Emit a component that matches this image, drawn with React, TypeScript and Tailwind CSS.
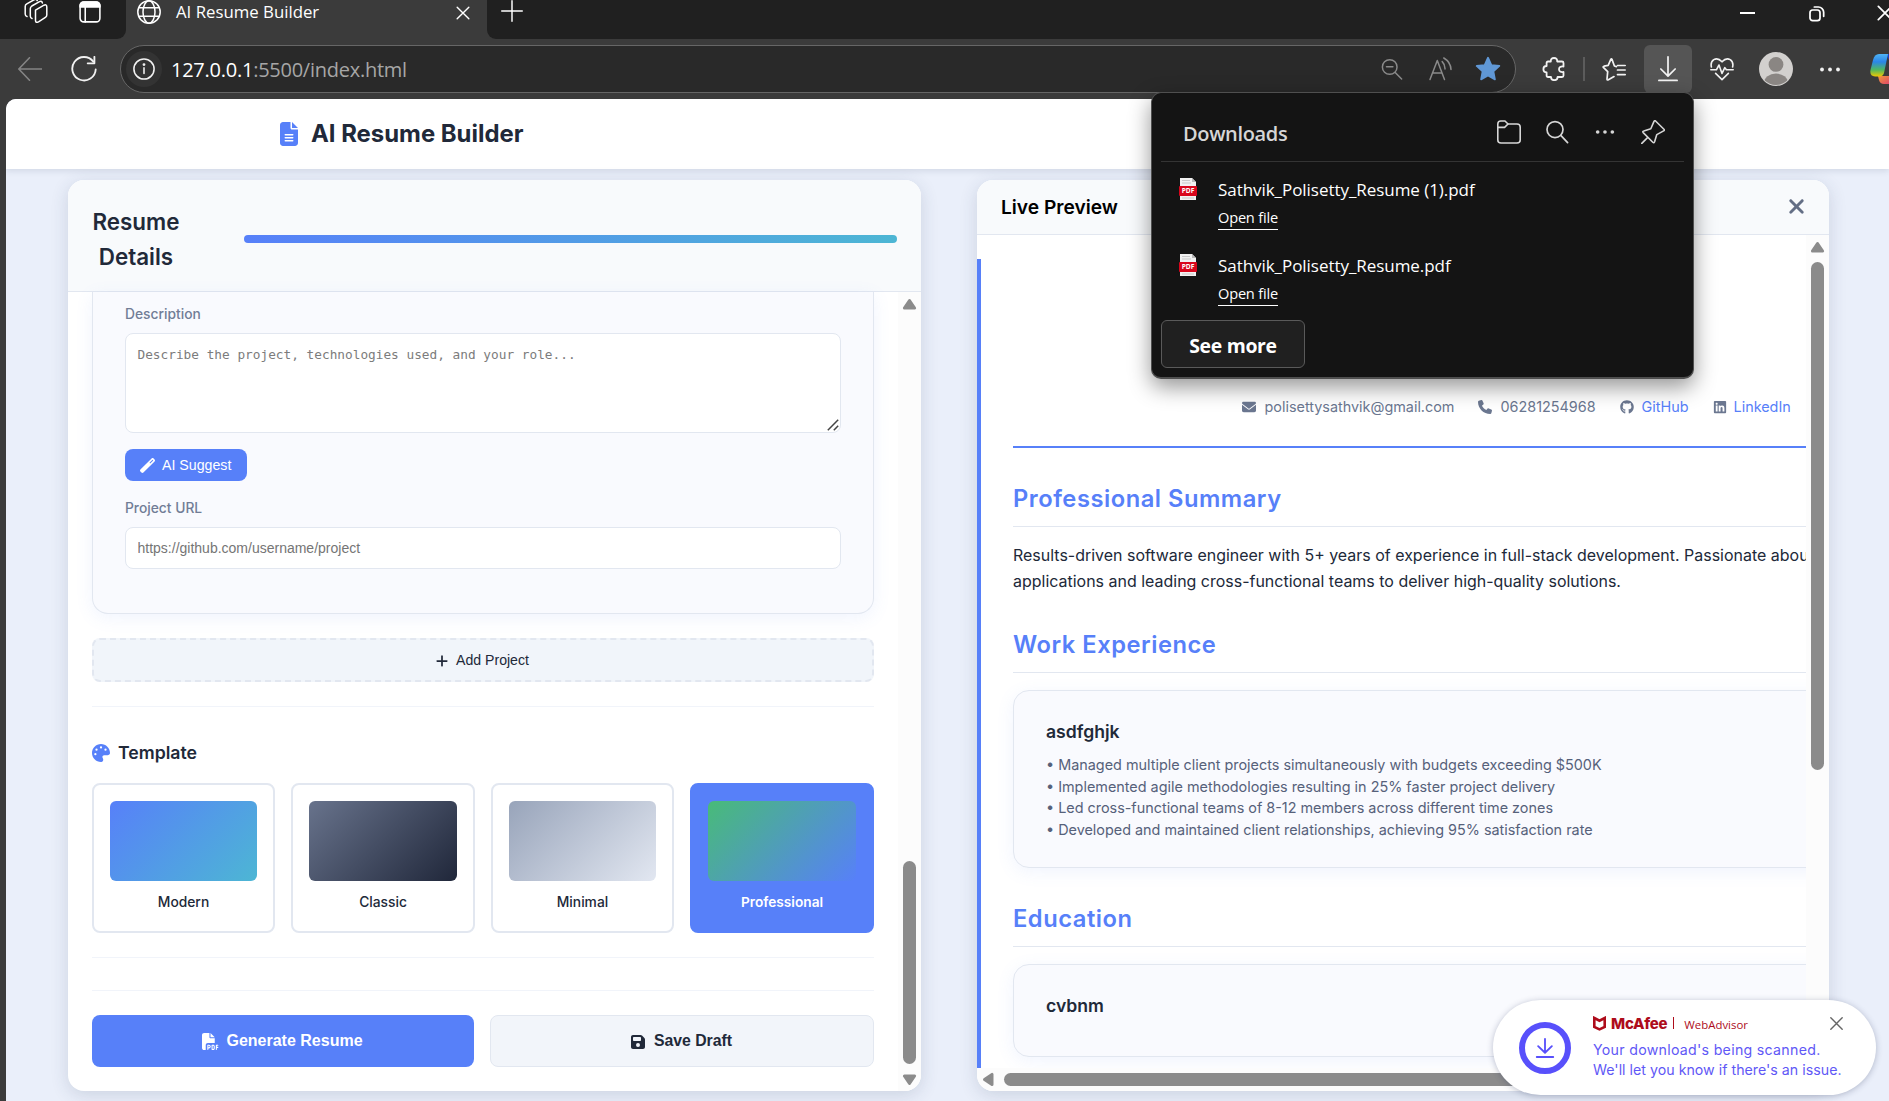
import React from "react";
import {
  FaFileLines,
  FaPalette,
  FaFilePdf,
  FaFloppyDisk,
  FaEnvelope,
  FaPhone,
  FaGithub,
  FaLinkedin,
  FaPlus,
  FaXmark,
  FaWandMagic,
} from "react-icons/fa6";

type IconProps = { size?: number; className?: string; children: React.ReactNode; sw?: number };

function Line({ size = 24, className = "", sw = 1.5, children }: IconProps) {
  return (
    <svg
      width={size}
      height={size}
      viewBox="0 0 24 24"
      fill="none"
      stroke="currentColor"
      strokeWidth={sw}
      strokeLinecap="round"
      strokeLinejoin="round"
      className={"shrink-0 " + className}
    >
      {children}
    </svg>
  );
}

function Dots({ r = 2 }: { r?: number }) {
  return (
    <svg width="22" height="24" viewBox="0 0 24 24" fill="currentColor">
      <circle cx="4" cy="12" r={r} />
      <circle cx="12" cy="12" r={r} />
      <circle cx="20" cy="12" r={r} />
    </svg>
  );
}

function TabStrip() {
  return (
    <div className="flex h-[39px] shrink-0 bg-[#3b3b3b] text-white">
      <div className="flex w-[126px] items-start rounded-br-[9px] bg-[#202020] pl-6">
        <Line className="-mt-px" sw={1.5}>
          <path d="M11.5 11.2 L20 6.2 Q22.8 5 22.8 8 V16 Q22.8 17.6 21.4 18.4 L14.5 22.8 Q11.5 24.4 11.5 21.4 Z" />
          <path d="M8 19.5 Q6.3 19 6.3 17 V9.8 Q6.3 8 7.8 7 L15.5 2.6 Q18 1.6 18.4 4" />
          <path d="M3 17.5 Q1.2 17 1.2 15 V7.5 Q1.2 5.8 2.8 4.9 L10 .8 Q12.8 -.4 13.2 1.6" />
        </Line>
        <Line size={22} className="ml-[31px] mt-px" sw={1.7}>
          <rect x="1.2" y="1.2" width="21.6" height="21.6" rx="4" />
          <path d="M1.2 6.5 V5 a4 4 0 0 1 4-4 h13.6 a4 4 0 0 1 4 4 v1.5 z" fill="currentColor" />
          <path d="M6.8 7 V22.8" />
        </Line>
      </div>
      <div className="flex w-[361px] items-start pl-[11px]">
        <Line sw={1.5}>
          <circle cx="12" cy="12" r="11.2" />
          <ellipse cx="12" cy="12" rx="6" ry="11.2" />
          <path d="M2 7.8 H22 M2 16.2 H22" />
        </Line>
        <span className="ml-[15px] mt-px font-['Open_Sans'] text-[16.8px] leading-[22px] whitespace-nowrap">AI Resume Builder</span>
        <Line size={14} className="mt-[6px] mr-[17px] ml-auto" sw={2.4}>
          <path d="M2 2 L22 22 M22 2 L2 22" />
        </Line>
      </div>
      <div className="flex flex-1 items-start rounded-bl-[9px] bg-[#202020] pl-[14px]">
        <Line size={22} sw={1.6}>
          <path d="M12 .8 V23.2 M.8 12 H23.2" />
        </Line>
        <div className="ml-auto flex w-[149px] shrink-0 items-start">
          <div className="mt-[12px] h-[2px] w-[15px] shrink-0 bg-white" />
          <Line size={16} className="mt-[6px] ml-[54px]" sw={2.6}>
            <rect x="1.5" y="6" width="15" height="16" rx="4" />
            <path d="M8 1.5 h6 a8 8 0 0 1 8 8 v6" />
          </Line>
          <Line size={16} className="mt-[5px] ml-[52px]" sw={2.6}>
            <path d="M2 2 L22 22 M22 2 L2 22" />
          </Line>
        </div>
      </div>
    </div>
  );
}

function Toolbar() {
  return (
    <div className="flex h-[60px] shrink-0 items-start bg-[#3b3b3b] pt-[6px] text-[#f2f2f2]">
      <div className="flex h-12 w-[120px] shrink-0 items-center pl-[18px]">
        <Line className="text-[#858585]" sw={1.6}>
          <path d="M23.5 12 H1 M11.5 .8 L.8 12 L11.5 23.2" />
        </Line>
        <Line className="ml-[29px]" size={26} sw={1.7}>
          <path d="M20.6 5.2 A10.8 10.8 0 1 0 22.8 12.4" />
          <path d="M21.6 .8 V6.8 H15.4" />
        </Line>
      </div>
      <div className="flex h-12 w-[1396px] shrink-0 items-center rounded-full border-[1.5px] border-[#666666] bg-[#292929]">
        <div className="ml-[5px] flex size-9 items-center justify-center rounded-full bg-[#333333]">
          <Line size={22} sw={1.7}>
            <circle cx="12" cy="12" r="11" />
            <path d="M12 10.8 V17" />
            <circle cx="12" cy="7.2" r=".7" fill="currentColor" />
          </Line>
        </div>
        <span className="mt-px ml-[9px] font-['Open_Sans'] text-[20px] leading-none tracking-[-0.25px] whitespace-nowrap text-[#a6a6a6]">
          <span className="text-white">127.0.0.1</span>:5500/index.html
        </span>
        <div className="mr-[3px] ml-auto flex text-[#8a8a8a]">
          <div className="flex w-12 items-center justify-center">
            <Line size={22} sw={1.6}>
              <circle cx="9.5" cy="9.8" r="8" />
              <path d="M15.5 15.8 L22.5 23 M6 9.6 H13" />
            </Line>
          </div>
          <div className="flex w-12 items-center justify-center">
            <Line size={24} sw={1.5}>
              <path d="M2 22.5 L9.3 3.5 L16.5 22.5 M4.6 16 H14" />
              <path d="M14.2 4.6 Q17.2 7.6 17 12 M15.8 1 Q22.6 5 23 12.4" />
            </Line>
          </div>
          <div className="flex w-12 items-center justify-center text-[#6098d6]">
            <svg width="26" height="26" viewBox="0 0 24 24" fill="currentColor" stroke="currentColor" strokeWidth="1.6" strokeLinejoin="round">
              <path d="M12 1.6 L15.1 8.3 L22.5 9.2 L17 14.2 L18.4 21.6 L12 18 L5.6 21.6 L7 14.2 L1.5 9.2 L8.9 8.3 Z" />
            </svg>
          </div>
        </div>
      </div>
      <div className="ml-[14px] flex h-12 w-12 shrink-0 items-center justify-center">
        <Line sw={1.8}>
          <path d="M6 4.5 H8.8 Q8.6 1 12 1 Q15.4 1 15.2 4.5 H20 Q21.5 4.5 21.5 6 V9.5 Q17 9 17 12.3 Q17 15.5 21.5 15 V18.6 Q21.5 20 20 20 H15.6 Q15.6 23.2 12.2 23.2 Q9 23.2 9 20 H6 Q4.6 20 4.6 18.6 V15.4 Q1.4 15.4 1.4 12.2 Q1.4 9 4.6 9 V6 Q4.6 4.5 6 4.5 Z" />
        </Line>
      </div>
      <div className="mx-[5px] mt-3 h-6 w-[2px] shrink-0 bg-[#5c5c5c]" />
      <div className="flex h-12 w-12 shrink-0 items-center justify-center">
        <Line sw={1.7}>
          <path d="M14 9.2 L12 8.6 L9.6 2 Q9 .8 8.4 2 L5.8 8 L1.6 8.8 Q.2 9.2 1.2 10.3 L5.3 14.3 L4.6 21.6 Q4.6 23 6 22.4 L11.6 19.2" transform="translate(.4 .4)" />
          <path d="M15.5 8.5 H23.2 M15.5 13 H23.2 M15.5 17.6 H23.2" />
        </Line>
      </div>
      <div className="ml-[6px] flex h-12 w-12 shrink-0 items-center justify-center rounded-[6px] bg-[#555555]">
        <Line size={26} sw={1.6}>
          <path d="M12 .8 V18 M5.4 12 L12 18.6 L18.6 12 M3.6 22.6 H20.4" />
        </Line>
      </div>
      <div className="ml-[6px] flex h-12 w-12 shrink-0 items-center justify-center">
        <Line sw={1.6}>
          <path d="M1.4 10 Q.2 5 3.8 2.6 Q8 .4 12 4.8 Q16 .4 20.2 2.6 Q23.8 5 22.6 10" />
          <path d="M.8 12.8 H6.4 L9 8 L12 16.4 L14.8 10.6 L16.4 12.8 H23.2" />
          <path d="M5.6 16.4 L12 22.6 L18.4 16.4" />
        </Line>
      </div>
      <div className="ml-[6px] flex h-12 w-12 shrink-0 items-center justify-center">
        <svg width="34" height="34" viewBox="0 0 34 34">
          <defs>
            <clipPath id="av">
              <circle cx="17" cy="17" r="16" />
            </clipPath>
          </defs>
          <circle cx="17" cy="17" r="17" fill="#d2d0ce" />
          <g clipPath="url(#av)" fill="#8a8683">
            <circle cx="17" cy="12.4" r="7.4" />
            <ellipse cx="17" cy="31" rx="12" ry="9.4" />
          </g>
        </svg>
      </div>
      <div className="ml-[6px] flex h-12 w-12 shrink-0 items-center justify-center">
        <svg width="20" height="20" viewBox="0 0 20 20" fill="currentColor">
          <circle cx="2" cy="10.5" r="1.9" />
          <circle cx="10" cy="10.5" r="1.9" />
          <circle cx="18" cy="10.5" r="1.9" />
        </svg>
      </div>
      <svg width="34" height="32" viewBox="0 0 34 32" className="mt-[8px] ml-[16px] shrink-0">
        <defs>
          <linearGradient id="cpA" x1="0" y1="0" x2="0" y2="1">
            <stop offset="0" stopColor="#4fb4f5" />
            <stop offset=".35" stopColor="#2b86e8" />
            <stop offset=".7" stopColor="#4fb860" />
            <stop offset="1" stopColor="#f0c800" />
          </linearGradient>
          <linearGradient id="cpB" x1="0" y1="0" x2="1" y2="1">
            <stop offset="0" stopColor="#f29a3a" />
            <stop offset="1" stopColor="#e0446a" />
          </linearGradient>
        </defs>
        <path d="M8 23 H20 V31 H14 Q10 31 9 27 Z" fill="url(#cpB)" />
        <path d="M16 1 H22 Q25 1 26 6 L27 9 H20 Z" fill="#1b3fc4" />
        <path d="M9 1 H18 L14 20 Q13 23.5 9 23.5 H5 Q-.5 23 .5 17 L3 7 Q4.5 1 9 1 Z" fill="url(#cpA)" />
      </svg>
    </div>
  );
}

function Tri({ dir }: { dir: "up" | "down" | "left" }) {
  const d =
    dir === "up"
      ? "M7.5 3.5 L12.6 11 H2.4 Z"
      : dir === "down"
        ? "M7.5 11.5 L12.6 4 H2.4 Z"
        : "M3.5 7.5 L11 2.4 V12.6 Z";
  return (
    <svg width="15" height="15" viewBox="0 0 15 15" fill="#8b8b8b" stroke="#8b8b8b" strokeWidth="3" strokeLinejoin="round" className="shrink-0">
      <path d={d} />
    </svg>
  );
}

const templates = [
  { name: "Modern", swatch: "bg-[linear-gradient(135deg,#5780f9,#4db6d4)]", on: false },
  { name: "Classic", swatch: "bg-[linear-gradient(135deg,#68738c,#20273a)]", on: false },
  { name: "Minimal", swatch: "bg-[linear-gradient(135deg,#98a4ba,#e2e7f1)]", on: false },
  { name: "Professional", swatch: "bg-[linear-gradient(135deg,#48bb78,#5780f9)]", on: true },
];

function ResumeForm() {
  return (
    <section className="flex h-[911px] w-[853px] shrink-0 flex-col overflow-hidden rounded-[16px] bg-white shadow-[0_4px_18px_rgba(45,60,95,0.16)]">
      <div className="flex h-28 shrink-0 items-center border-b border-[#e2e7f0] bg-[#f8fafc] pt-[6px] pl-6">
        <h2 className="w-[88px] text-center text-[22.4px] leading-[35px] font-semibold text-[#212939]">Resume Details</h2>
        <div className="ml-16 h-2 w-[653px] rounded-full bg-[linear-gradient(90deg,#5780f9,#4db6d4)]" />
      </div>
      <div className="flex min-h-0 flex-1">
        <div className="flex w-[830px] flex-col px-6">
          <div className="h-[322px] w-[782px] shrink-0 rounded-b-[16px] border border-t-0 border-[#e2e7f0] bg-[#f9fafe] px-8 pt-[11px] shadow-[0_4px_18px_rgba(87,128,249,0.09)]">
            <label className="block text-[13.8px] leading-[22px] font-medium text-[#717d96]">Description</label>
            <div className="relative mt-2 h-[100px] w-[716px]">
              <textarea
                className="block h-full w-full resize-none rounded-[8px] border border-[#e2e7f0] bg-white px-[11.5px] pt-[13px] font-['DejaVu_Sans_Mono',monospace] text-[12.77px] leading-4 placeholder:text-[#7c7c7c]"
                placeholder="Describe the project, technologies used, and your role..."
              />
              <svg width="12" height="12" viewBox="0 0 12 12" className="absolute right-[2px] bottom-[2px]" stroke="#444444" strokeWidth="1.5">
                <path d="M.8 11.2 L11.2 .8 M6.8 11.2 L11.2 6.8" />
              </svg>
            </div>
            <button className="mt-4 flex h-8 w-[122px] items-center rounded-[8px] bg-[#5780f9] pt-px pl-[15px] font-['Liberation_Sans'] text-[14.2px] text-white">
              <FaWandMagic size={15} />
              <span className="ml-[7px]">AI Suggest</span>
            </button>
            <label className="mt-4 block text-[13.8px] leading-[22px] font-medium text-[#717d96]">Project URL</label>
            <input
              className="mt-2 block h-[42px] w-[716px] rounded-[8px] border border-[#e2e7f0] bg-white px-[11.5px] font-['Liberation_Sans'] text-[14px] placeholder:text-[#757575]"
              placeholder="https://github.com/username/project"
            />
          </div>
          <button className="mt-6 flex h-11 w-[782px] shrink-0 items-center justify-center rounded-[8px] border-2 border-dashed border-[#e2e7f0] bg-[#f1f5fa] pt-px pr-[2px] font-['Liberation_Sans'] text-[14.1px] text-[#212939]">
            <FaPlus size={14} className="mr-[7px]" />
            Add Project
          </button>
          <div className="mt-6 h-px w-[782px] shrink-0 bg-[#f1f4fa]" />
          <h3 className="mt-[32px] flex h-7 shrink-0 items-center text-[17.7px] font-semibold text-[#212939]">
            <FaPalette size={18} className="mr-2 text-[#5780f9]" />
            Template
          </h3>
          <div className="mt-4 grid w-[782px] shrink-0 grid-cols-[183px_184px_183px_184px] gap-4">
            {templates.map((t) => (
              <div
                key={t.name}
                className={
                  t.on
                    ? "h-[150px] rounded-[8px] border-2 border-[#5780f9] bg-[#5780f9] p-4 text-center text-[13.7px] font-semibold text-white"
                    : "h-[150px] rounded-[8px] border-2 border-[#e2e7f0] bg-white p-4 text-center text-[13.8px] font-medium text-[#212939]"
                }
              >
                <div className={"h-20 rounded-[6px] " + t.swatch} />
                <div className="mt-[10px] leading-[22px]">{t.name}</div>
              </div>
            ))}
          </div>
          <div className="mt-6 h-px w-[782px] shrink-0 bg-[#f1f4fa]" />
          <div className="mt-8 h-px w-[782px] shrink-0 bg-[#f1f4fa]" />
          <div className="mt-6 flex w-[782px] shrink-0 gap-4 font-['Liberation_Sans'] font-bold">
            <button className="flex h-[52px] w-[382px] items-center justify-center rounded-[8px] bg-[#5780f9] pr-px text-[16px] text-white">
              <FaFilePdf size={17} className="mr-[7px]" />
              Generate Resume
            </button>
            <button className="flex h-[52px] w-[384px] items-center justify-center rounded-[8px] border border-[#e2e7f0] bg-[#f2f5fa] pr-[2px] text-[15.8px] text-[#212939]">
              <FaFloppyDisk size={16} className="mt-px mr-2" />
              Save Draft
            </button>
          </div>
        </div>
        <div className="flex w-[23px] flex-col items-center bg-[#fcfcfc] pt-[5px] pb-[4px]">
          <Tri dir="up" />
          <div className="mt-auto mb-[8px] h-[203px] w-[13px] rounded-full bg-[#8b8b8b]" />
          <Tri dir="down" />
        </div>
      </div>
    </section>
  );
}

function SectionTitle({ children }: { children: React.ReactNode }) {
  return (
    <h3 className="w-[1000px] border-b border-[#e2e7f0] pt-px pb-[10px] text-[23.7px] leading-[34px] font-semibold tracking-[0.53px] text-[#5780f9]">
      {children}
    </h3>
  );
}

const bullets = [
  "• Managed multiple client projects simultaneously with budgets exceeding $500K",
  "• Implemented agile methodologies resulting in 25% faster project delivery",
  "• Led cross-functional teams of 8-12 members across different time zones",
  "• Developed and maintained client relationships, achieving 95% satisfaction rate",
];

function Preview() {
  return (
    <section className="flex h-[911px] w-[852px] shrink-0 flex-col overflow-hidden rounded-[16px] bg-white shadow-[0_4px_18px_rgba(45,60,95,0.16)]">
      <div className="flex h-[55px] shrink-0 items-center justify-between border-b border-[#e2e7f0] bg-[#f8fafc] pr-[21px] pl-6">
        <h2 className="text-[19.2px] font-semibold text-black">Live Preview</h2>
        <FaXmark size={23} className="-mt-[2px] text-[#636e85]" />
      </div>
      <div className="flex min-h-0 flex-1">
        <div className="w-[829px] overflow-hidden pt-6">
          <div className="h-[809px] w-[1060px] border-l-4 border-[#5780f9] pl-8">
            <div className="flex h-[189px] w-[1000px] items-start border-b-2 border-[#5780f9] pt-[136px] pl-[229px] text-[14.4px] leading-[23px] text-[#6b7790]">
              <div className="flex items-center whitespace-nowrap">
                <FaEnvelope size={14} />
                <span className="ml-[8.5px]">polisettysathvik@gmail.com</span>
                <FaPhone size={14} className="ml-6" />
                <span className="ml-[8px]">06281254968</span>
                <FaGithub size={14} className="ml-6" />
                <span className="ml-[8px] text-[#5780f9]">GitHub</span>
                <FaLinkedin size={14} className="ml-6" />
                <span className="ml-[7px] text-[#5780f9]">LinkedIn</span>
              </div>
            </div>
            <div className="pt-[33px]">
              <SectionTitle>Professional Summary</SectionTitle>
              <p className="mt-[16px] text-[15.97px] leading-[26px] whitespace-nowrap text-[#212939]">
                Results-driven software engineer with 5+ years of experience in full-stack development. Passionate about building scalable
                <br />
                applications and leading cross-functional teams to deliver high-quality solutions.
              </p>
            </div>
            <div className="pt-[32px]">
              <SectionTitle>Work Experience</SectionTitle>
              <div className="mt-[17px] h-[178px] w-[1000px] rounded-[16px] border border-[#e2e7f0] bg-[#f9fafe] px-8 pt-[27px] shadow-[0_4px_18px_rgba(87,128,249,0.09)]">
                <div className="text-[17.6px] leading-7 font-semibold text-[#212939]">asdfghjk</div>
                <div className="mt-2 text-[14.4px] leading-[21.6px] text-[#56617a]">
                  {bullets.map((b) => (
                    <div key={b}>{b}</div>
                  ))}
                </div>
              </div>
            </div>
            <div className="pt-[33px]">
              <SectionTitle>Education</SectionTitle>
              <div className="mt-[17px] h-[93px] w-[1000px] rounded-[16px] border border-[#e2e7f0] bg-[#f9fafe] px-8 pt-[27px] shadow-[0_4px_18px_rgba(87,128,249,0.09)]">
                <div className="text-[17.6px] leading-7 font-semibold text-[#212939]">cvbnm</div>
              </div>
            </div>
          </div>
        </div>
        <div className="flex w-[23px] flex-col items-center bg-[#fcfcfc] pt-[5px]">
          <Tri dir="up" />
          <div className="mt-[7px] h-[508px] w-[13px] rounded-full bg-[#8b8b8b]" />
        </div>
      </div>
      <div className="flex h-[23px] shrink-0 items-center bg-[#fcfcfc] pl-[4px]">
        <Tri dir="left" />
        <div className="ml-2 h-[13px] w-[720px] rounded-full bg-[#8b8b8b]" />
      </div>
    </section>
  );
}

function PdfIcon() {
  return (
    <svg width="18" height="22" viewBox="0 0 18 22" className="shrink-0">
      <path d="M1 0 H13 L17 4 V22 H1 Z" fill="#f1f1f1" />
      <path d="M13 0 L17 4 H13 Z" fill="#b9b9b9" />
      <path d="M3 2.5 H11 M3 5 H12 M3 20 H15" stroke="#c9c9c9" strokeWidth="1" />
      <rect x="0" y="8" width="18" height="10" rx="1" fill="#d9061c" />
      <text x="9" y="15.4" textAnchor="middle" fontSize="6.6" fontWeight="700" fill="#fff" fontFamily="Open Sans">
        PDF
      </text>
    </svg>
  );
}

function DownloadItem({ name }: { name: string }) {
  return (
    <div className="flex h-[76px] pl-[27px]">
      <PdfIcon />
      <div className="ml-[21px] flex flex-col items-start">
        <div className="text-[17px] leading-6 tracking-[-0.05px] whitespace-nowrap text-white">{name}</div>
        <div className="mt-[5px] h-[23px] border-b border-white text-[14.6px] leading-[20px] tracking-[-0.2px] text-white">Open file</div>
      </div>
    </div>
  );
}

function DownloadsPopup() {
  return (
    <div className="absolute top-[92px] left-[1151px] h-[287px] w-[543px] rounded-[10px] border border-b-2 border-[#4f4f4f] bg-[#141414] font-['Open_Sans'] shadow-[0_8px_22px_rgba(0,0,0,0.42)]">
      <div className="mx-[9px] flex h-[69px] items-center border-b border-[#343434] pr-[7px] pl-[22px] text-[#d6d6d6]">
        <span className="mt-[14px] text-[20px] leading-7 font-semibold tracking-[-0.35px]">Downloads</span>
        <div className="mt-[9px] ml-auto flex">
          <div className="flex w-12 items-center justify-center">
            <Line sw={1.6}>
              <path d="M.8 7 V4 Q.8 1 3.8 1 H8 L11 4 H20 Q23.2 4 23.2 7 V20 Q23.2 23 20 23 H4 Q.8 23 .8 20 Z" />
              <path d="M.8 7.4 H7.6 L11 4" />
            </Line>
          </div>
          <div className="flex w-12 items-center justify-center">
            <Line sw={1.7}>
              <circle cx="10" cy="9.6" r="8" />
              <path d="M15.8 15.4 L22.6 22.6" />
            </Line>
          </div>
          <div className="flex w-12 items-center justify-center">
            <Dots />
          </div>
          <div className="flex w-12 items-center justify-center">
            <Line sw={1.6}>
              <path d="M14.3 .8 L23.2 9.5 Q23.6 10.4 22.6 10.9 L15.8 14.6 L13.6 21.8 Q13 23.4 11.8 22.2 L2.2 12.6 Q1.2 11.4 2.8 11 L9.8 8.8 L13 1.4 Q13.5 .4 14.3 .8 Z M6.8 17.4 L.8 23.4" />
            </Line>
          </div>
        </div>
      </div>
      <div className="pt-[16px]">
        <DownloadItem name="Sathvik_Polisetty_Resume (1).pdf" />
        <DownloadItem name="Sathvik_Polisetty_Resume.pdf" />
      </div>
      <button className="-mt-[10px] ml-[9px] flex h-12 w-[144px] items-center justify-center rounded-[6px] border border-[#5a5a5a] bg-[#202020] pt-[4px] text-[19.4px] font-bold tracking-[-0.3px] text-white">
        See more
      </button>
    </div>
  );
}

function McAfeeToast() {
  return (
    <div className="absolute top-[1000px] left-[1493px] flex h-[95px] w-[383px] rounded-full bg-white shadow-[0_1px_6px_rgba(40,50,90,0.3)]">
      <div className="mt-[22px] ml-[26px] flex size-[52px] shrink-0 items-center justify-center rounded-full border-[6px] border-[#5850fb] text-[#5850fb]">
        <Line size={22} sw={2}>
          <path d="M12 2 V16 M4.5 10 L12 17.2 L19.5 10 M3 21.8 H21" />
        </Line>
      </div>
      <div className="ml-[22px] pt-[12px]">
        <div className="flex h-[22px] items-center text-[#ae0c1b]">
          <svg width="13" height="15" viewBox="0 0 13 15" fill="none" stroke="#ae0c1b" strokeWidth="2.6" className="mt-px">
            <path d="M1.3 2 L6.5 4.7 L11.7 2 V11 L6.5 13.4 L1.3 11 Z" />
          </svg>
          <span className="ml-[5px] text-[15px] leading-none font-extrabold tracking-[-0.25px]">McAfee</span>
          <span className="ml-[6px] h-3 w-px bg-[#ae0c1b]" />
          <span className="mt-[3px] ml-[10px] font-['Open_Sans'] text-[11.4px] leading-none">WebAdvisor</span>
        </div>
        <div className="mt-[6px] text-[14.2px] leading-5 whitespace-nowrap text-[#5f58f6]">
          <div className="tracking-[0.28px]">Your download's being scanned.</div>
          <div className="tracking-[0.02px]">We'll let you know if there's an issue.</div>
        </div>
      </div>
      <Line size={13} className="absolute top-[17px] left-[337px] text-[#666666]" sw={2.6}>
        <path d="M1.5 1.5 L22.5 22.5 M22.5 1.5 L1.5 22.5" />
      </Line>
    </div>
  );
}

export default function App() {
  return (
    <div className="relative flex h-[1101px] w-[1889px] flex-col overflow-hidden bg-[#3b3b3b] font-[Inter,sans-serif]">
      <TabStrip />
      <Toolbar />
      <div className="ml-[6px] flex min-h-0 flex-1 flex-col overflow-hidden rounded-tl-[10px] bg-[#eaeffa]">
        <header className="flex h-[70px] shrink-0 items-center bg-white pl-[271px] shadow-[0_2px_6px_rgba(45,60,95,0.13)]">
          <FaFileLines size={24} className="text-[#5780f9]" />
          <h1 className="ml-[10px] text-[23.9px] font-bold text-[#212939]">AI Resume Builder</h1>
        </header>
        <main className="flex gap-14 pt-[11px] pl-[62px]">
          <ResumeForm />
          <Preview />
        </main>
      </div>
      <DownloadsPopup />
      <McAfeeToast />
    </div>
  );
}
